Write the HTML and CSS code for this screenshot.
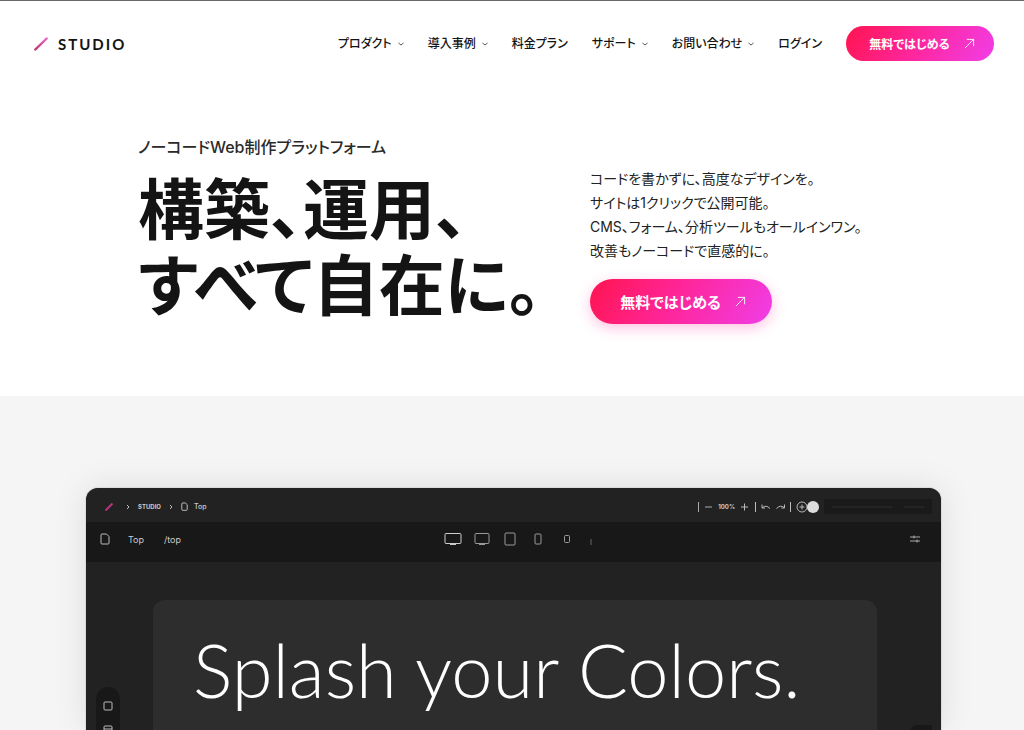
FILE: index.html
```html
<!DOCTYPE html>
<html lang="ja">
<head>
<meta charset="utf-8">
<meta name="viewport" content="width=device-width, initial-scale=1">
<title>STUDIO</title>
<link rel="stylesheet" href="styles.css">
</head>
<body class="page">
<header class="header">
  <a class="logo" href="#">
    <svg class="logo-mark" viewBox="0 0 14 14" aria-hidden="true"><defs><linearGradient id="slash" x1="0" y1="1" x2="1" y2="0"><stop offset="0" stop-color="#c93272"/><stop offset="1" stop-color="#e36bc4"/></linearGradient></defs><path d="M1.2 12.6 12.8 1.4" stroke="url(#slash)" stroke-width="2.2" stroke-linecap="round"/></svg>
    <span class="logo-text">STUDIO</span>
  </a>
  <nav class="nav">
    <a class="nav-link" href="#">プロダクト<svg class="chevron" viewBox="0 0 6 4" aria-hidden="true"><path d="M.5 1 3 3 5.500 1"/></svg></a>
    <a class="nav-link" href="#">導入事例<svg class="chevron" viewBox="0 0 6 4" aria-hidden="true"><path d="M.5 1 3 3 5.500 1"/></svg></a>
    <a class="nav-link" href="#">料金プラン</a>
    <a class="nav-link" href="#">サポート<svg class="chevron" viewBox="0 0 6 4" aria-hidden="true"><path d="M.5 1 3 3 5.500 1"/></svg></a>
    <a class="nav-link" href="#">お問い合わせ<svg class="chevron" viewBox="0 0 6 4" aria-hidden="true"><path d="M.5 1 3 3 5.500 1"/></svg></a>
    <a class="nav-link" href="#">ログイン</a>
    <a class="cta cta-small" href="#">無料ではじめる<svg class="arrow" viewBox="0 0 12 12" aria-hidden="true"><path d="M1 11 11 1M3 1.500H10.500V9"/></svg></a>
  </nav>
</header>

<main class="main">
  <section class="hero">
    <div class="hero-title">
      <p class="eyebrow">ノーコードWeb制作プラットフォーム</p>
      <h1 class="headline">構築、運用、<br>すべて自在に。</h1>
    </div>
    <div class="hero-copy">
      <p class="lead">コードを書かずに、高度なデザインを。<br>サイトは1クリックで公開可能。<br>CMS、フォーム、分析ツールもオールインワン。<br>改善もノーコードで直感的に。</p>
      <a class="cta cta-large" href="#">無料ではじめる<svg class="arrow" viewBox="0 0 12 12" aria-hidden="true"><path d="M1 11 11 1M3 1.500H10.500V9"/></svg></a>
    </div>
  </section>

  <section class="showcase">
    <div class="editor">
      <div class="topbar">
        <div class="crumbs">
          <svg class="crumb-mark" viewBox="0 0 10 10" aria-hidden="true"><path d="M1.500 8.500 8.500 1.500"/></svg>
          <svg class="crumb-sep" viewBox="0 0 4 6" aria-hidden="true"><path d="M1 1 3 3 1 5"/></svg>
          <strong class="crumb-name">STUDIO</strong>
          <svg class="crumb-sep" viewBox="0 0 4 6" aria-hidden="true"><path d="M1 1 3 3 1 5"/></svg>
          <span class="crumb-page"><svg class="icon-page-small" viewBox="0 0 7 9" aria-hidden="true"><path d="M1.500 1H4.500L6.200 2.600V7.500Q6.200 8.300 5.400 8.300H1.600Q.8 8.300 .8 7.500V1.800Q.8 1 1.600 1"/></svg>Top</span>
        </div>
        <div class="zoom-tools">
          <svg class="zoom-out" viewBox="0 0 16 12" aria-hidden="true"><path d="M1.500 1V11M8 6H15"/></svg>
          <strong>100%</strong>
          <svg class="history" viewBox="0 0 79 14" aria-hidden="true"><path d="M1 7H8M4.500 3.500V10.500M15.500 2V12M22 4.500V8H25M22.500 7.500Q26 4.500 30 8.500M44.500 4.500V8H41.500M44 7.500Q40.500 4.500 36.500 8.500M50.500 2V12"/><circle cx="62" cy="7" r="5"/><path d="M59.500 7H64.500M62 4.500V9.500"/><circle class="avatar" cx="73" cy="7" r="6"/></svg>
          <div class="top-actions"><span class="ghost ghost-wide"></span><span class="ghost ghost-narrow"></span></div>
        </div>
      </div>
      <div class="toolbar">
        <div class="page-info">
          <svg class="icon-page" viewBox="0 0 10 12" aria-hidden="true"><path d="M2 1H6.500L9 3.500V10Q9 11 8 11H2Q1 11 1 10V2Q1 1 2 1"/></svg>
          <span class="page-name">Top</span>
          <span class="page-path">/top</span>
        </div>
        <div class="devices">
          <svg class="device device-xl" viewBox="0 0 18 14" aria-hidden="true"><rect x="1" y="1.500" width="16" height="10" rx="1"/><path d="M6 12.500H12"/></svg>
          <svg class="device device-lg" viewBox="0 0 16 14" aria-hidden="true"><rect x="1" y="1.500" width="14" height="10" rx="1"/><path d="M5 12.500H11"/></svg>
          <svg class="device device-md" viewBox="0 0 12 14" aria-hidden="true"><rect x="1" y="1" width="10" height="12" rx="1"/></svg>
          <svg class="device device-sm" viewBox="0 0 8 12" aria-hidden="true"><rect x="1" y="1" width="6" height="10" rx="1"/></svg>
          <svg class="device device-xs" viewBox="0 0 6 8" aria-hidden="true"><rect x=".5" y=".5" width="5" height="7" rx="1"/></svg>
          <svg class="device device-end" viewBox="0 0 2 6" aria-hidden="true"><path d="M1 0V6"/></svg>
        </div>
        <div class="settings"><svg class="icon-settings" viewBox="0 0 10 8" aria-hidden="true"><path d="M0 2H10M0 6H10M4 .5V3.500M7 4.500V7.500"/></svg></div>
      </div>
      <div class="canvas">
        <div class="artboard"><p class="splash">Splash your Colors.</p></div>
        <div class="dock"><svg class="dock-icons" viewBox="0 0 10 34" aria-hidden="true"><rect x="1" y="1" width="8" height="8" rx="1"/><rect x="1" y="25" width="8" height="8" rx="1"/><path d="M1 28H9"/></svg></div>
        <div class="corner"></div>
      </div>
    </div>
  </section>
</main>
</body>
</html>
```
FILE: styles.css
```css
* { box-sizing: border-box; }

.page {
  margin: 0;
  height: 100vh;
  display: flex;
  flex-direction: column;
  overflow: hidden;
  background: #fff;
  color: #141414;
  border-top: 1px solid #6b686b;
  font-family: Inter, "Noto Sans CJK JP", sans-serif;
  font-feature-settings: "palt";
}

a { color: inherit; text-decoration: none; }
p, h1 { margin: 0; }
svg { display: block; flex: none; fill: none; }

.header {
  display: flex;
  align-items: center;
  justify-content: space-between;
  padding: 25px 30px 25px 34px;
}
.logo { display: flex; align-items: center; gap: 10px; }
.logo-mark { width: 14px; height: 14px; }
.logo-text {
  font: 700 15px/20px Lato, sans-serif;
  letter-spacing: 2px;
}
.nav { display: flex; align-items: center; gap: 24px; }
.nav-link {
  display: flex;
  align-items: center;
  gap: 6px;
  font-size: 12px;
  font-weight: 500;
  line-height: 20px;
}
.chevron { width: 6px; height: 4px; stroke: #555; }

.cta {
  display: flex;
  align-items: center;
  justify-content: center;
  color: #fff;
  font-weight: 700;
  background: linear-gradient(120deg, #ff1450 0%, #ff2597 45%, #f03ee8 100%);
}
.arrow { width: 11px; height: 11px; stroke: #fff; }
.cta-small {
  width: 148px;
  height: 35px;
  padding-left: 4px;
  gap: 14px;
  border-radius: 18px;
  font-size: 12px;
}
.cta-large {
  width: 182px;
  height: 45px;
  padding-left: 4px;
  gap: 14px;
  border-radius: 23px;
  font-size: 15px;
  box-shadow: 0 4px 14px rgba(255, 37, 151, .28);
}

.main { flex: 1; min-height: 0; display: flex; flex-direction: column; }
.hero {
  width: 100%;
  max-width: 748px;
  margin: 0 auto;
  padding: 50px 0 72px;
  display: flex;
  gap: 40px;
}
.hero-title { flex: 0 0 412px; }
.eyebrow { color: #2a2a2a; font-size: 16px; font-weight: 500; line-height: 22px; }
.headline {
  padding-top: 14px;
  font-size: 66px;
  font-weight: 700;
  line-height: 76px;
  white-space: nowrap;
}
.hero-copy { padding-top: 31px; }
.lead {
  margin-bottom: 16px;
  color: #222;
  font-size: 14px;
  line-height: 24px;
  white-space: nowrap;
}

.showcase {
  flex: 1;
  min-height: 0;
  padding: 92px 83px 0 86px;
  background: #f5f5f5;
}
.editor {
  height: 100%;
  display: flex;
  flex-direction: column;
  overflow: hidden;
  color: #ccc;
  background: #222;
  border-radius: 12px 12px 0 0;
  box-shadow: 0 0 34px rgba(0, 0, 0, .1), 0 0 1px #555;
}
.topbar {
  flex: none;
  height: 34px;
  padding: 3px 9px 0 18px;
  display: flex;
  align-items: center;
  justify-content: space-between;
  font-size: 7px;
}
.crumbs { display: flex; align-items: center; gap: 8px; }
.crumb-mark { width: 10px; height: 10px; margin-right: 4px; stroke: #b5357e; stroke-width: 2; }
.crumb-name { font-size: 6px; }
.crumb-sep { width: 4px; height: 6px; stroke: #bbb; }
.crumb-page { display: flex; align-items: center; gap: 6px; font-weight: 500; }
.icon-page-small { width: 7px; height: 9px; stroke: #bbb; }
.zoom-tools { display: flex; align-items: center; gap: 5px; font-size: 6px; }
.zoom-out { width: 16px; height: 12px; stroke: #aaa; }
.history { width: 79px; height: 14px; stroke: #bbb; }
.avatar { fill: #ddd; stroke: none; }
.top-actions {
  width: 108px;
  height: 15px;
  padding: 0 8px;
  display: flex;
  align-items: center;
  justify-content: space-between;
  background: #1a1a1a;
}
.ghost { height: 2px; background: #242424; }
.ghost-wide { width: 60px; }
.ghost-narrow { width: 20px; }

.toolbar {
  flex: none;
  height: 40px;
  padding: 0 21px 6px 14px;
  display: grid;
  grid-template-columns: 1fr auto 1fr;
  align-items: center;
  background: #181818;
}
.page-info { display: flex; align-items: center; font-size: 9px; }
.icon-page { width: 10px; height: 12px; margin-right: 18px; stroke: #bbb; }
.page-name { margin-right: 20px; }
.devices { display: flex; align-items: center; gap: 12px; padding-left: 16px; }
.device { stroke: #999; }
.device-xl { width: 18px; height: 14px; stroke: #ccc; }
.device-lg { width: 16px; height: 14px; }
.device-md { width: 12px; height: 14px; margin-left: 2px; }
.device-sm { width: 8px; height: 12px; margin-left: 6px; }
.device-xs { width: 6px; height: 8px; margin-left: 10px; }
.device-end { width: 2px; height: 6px; margin: 6px 0 0 8px; stroke: #666; }
.settings { justify-self: end; }
.icon-settings { width: 10px; height: 8px; stroke: #aaa; }

.canvas {
  flex: 1;
  min-height: 0;
  position: relative;
  padding: 38px 64px 0 67px;
}
.artboard {
  height: 100%;
  padding: 24px 40px;
  border-radius: 12px 12px 0 0;
  background: #2d2d2d;
}
.splash {
  color: #fff;
  font: 300 74px/92px Lato, sans-serif;
  white-space: nowrap;
}
.dock {
  position: absolute;
  left: 10px;
  top: 125px;
  width: 24px;
  height: 100px;
  padding: 14px 7px;
  border-radius: 12px;
  background: #181818;
}
.dock-icons { width: 10px; height: 34px; stroke: #bbb; }
.corner {
  position: absolute;
  right: 9px;
  top: 163px;
  width: 22px;
  height: 30px;
  border-radius: 8px 0 0 0;
  background: #181818;
}
```
